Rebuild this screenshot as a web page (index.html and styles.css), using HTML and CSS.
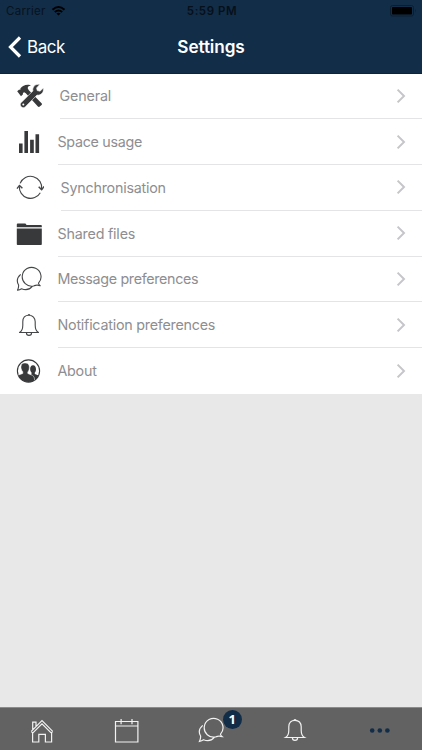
FILE: index.html
```
<!DOCTYPE html>
<html lang="en">
<head>
<meta charset="utf-8">
<title>Settings</title>
<link rel="stylesheet" href="styles.css">
</head>
<body>
<svg class="defs" width="0" height="0" aria-hidden="true">
  <symbol id="chevron" viewBox="0 0 10 16"><path d="M1.6 1.6 8 8 1.6 14.4" fill="none" stroke="#c6c6ca" stroke-width="2"/></symbol>
  <symbol id="chat" viewBox="0 0 26 26"><path d="M22.5 17.2A9.4 9.4 0 1 0 17.5 20C19.5 19.5 20.5 19 21.2 19Q22.5 19.7 24.2 19.7 22.6 18.6 22.5 17.2ZM4.7 8.4C1.2 11.5.5 15.5 2.6 19Q2.8 21.5 1.5 24.3 3.8 23.8 5.5 22.7C9.8 24.4 13.8 23.4 16.3 20.3"/></symbol>
  <symbol id="bell" viewBox="0 0 26 26"><path d="M12 3.2Q13 1.8 14 3.2M3.5 20.5H22.5C19.7 18.8 19.2 17 19.2 13.2V9.8C19.2 5.7 16.7 3.3 13 3.3S6.8 5.7 6.8 9.8V13.2C6.8 17 6.3 18.8 3.5 20.5ZM10.4 20.7C10.4 24.2 15.6 24.2 15.6 20.7"/></symbol>
</svg>
<div class="screen">
  <header class="top">
    <div class="status">
      <div class="carrier"><span>Carrier</span>
        <svg width="15" height="11" viewBox="0 0 15 11"><path d="M.8 4Q7.5-2 14.2 4L12.8 5.4Q7.5.8 2.2 5.4ZM3.1 6.3Q7.5 2.6 11.9 6.3L10.5 7.7Q7.5 5.2 4.5 7.7ZM5.4 8.5Q7.5 6.9 9.6 8.5L7.5 10.6Z"/></svg>
      </div>
      <div class="time">5:59 PM</div>
      <svg class="battery" width="27" height="12" viewBox="0 0 27 12"><rect x=".5" y=".5" width="23" height="10.5" rx="2" fill="none" stroke="#0b1e31"/><rect x="2" y="2" width="20" height="7.5" rx=".8"/><path d="M25 4Q26.5 5.8 25 7.5Z" fill="#0b1e31"/></svg>
    </div>
    <div class="nav">
      <div class="back"><svg width="14" height="22" viewBox="0 0 14 22"><path d="M12 1.5 2.5 11 12 20.5" fill="none" stroke="#fff" stroke-width="3.2"/></svg><span>Back</span></div>
      <h1>Settings</h1>
    </div>
  </header>

  <main class="list">
    <div class="row general">
      <svg class="icon" viewBox="0 0 28 28"><g fill="#38393b"><path d="M1.2 9.2 3.2 7.5 4.2 8.1 4.5 6.2C6.8 3.8 9 2.4 13 2.8L15 3.5C12.3 3.8 11.5 5 11.8 6.5L12.8 8.2 25.8 21.5Q26.3 22.2 25.6 22.9L23.4 24.8Q22.6 25.3 21.9 24.6L9.8 11.3 8.2 10.3 6.9 11.1 7 12.3 5 14.2Z"/><path stroke="#fff" stroke-width=".6" d="M23.7 2.5 20.6 5.9 21.2 8.6 24 9.2 27.4 6.1C28 10.3 25.3 13.6 21 13.1L9.4 24.7C6.5 27.6 2.4 23.5 5.2 20.6L16.900 8.9C16.1 4.8 19.5 1.6 23.7 2.5Z"/></g><circle cx="7.3" cy="22.6" r="1" fill="#fff"/></svg>
      <div class="cell"><span>General</span><svg class="chev"><use href="#chevron"/></svg></div>
    </div>
    <div class="row space">
      <svg class="icon" viewBox="0 0 28 28"><path fill="#38393b" d="M3 15.5h3.6V25H3zM8.4 3H12v22H8.400zM14.100 11.800h3.700V25h-3.700zM19.500 6.200h3.600V25h-3.600z"/></svg>
      <div class="cell"><span>Space usage</span><svg class="chev"><use href="#chevron"/></svg></div>
    </div>
    <div class="row sync">
      <svg class="icon" viewBox="0 0 28 28"><path class="line" d="M4.100 9.400A11.200 11.200 0 0 1 25.600 15.200M24.300 18.700A11.200 11.200 0 0 1 3.400 12.200"/><path class="line arrow" d="M22.700 12.700 25.600 15.800 28 12.500M1 14.700 3.500 11.400 6.400 14.300"/></svg>
      <div class="cell"><span>Synchronisation</span><svg class="chev"><use href="#chevron"/></svg></div>
    </div>
    <div class="row shared">
      <svg class="icon" viewBox="0 0 28 28"><path fill="#38393b" d="M.8 7.300V4.400Q.8 3.500 1.700 3.500H9.400L10.600 5H25Q25.800 5 25.800 5.800V7.300ZM.8 8.400H25.800V24.200Q25.800 25 25 25H1.600Q.8 25 .8 24.200Z"/></svg>
      <div class="cell"><span>Shared files</span><svg class="chev"><use href="#chevron"/></svg></div>
    </div>
    <div class="row message">
      <svg class="icon line"><use href="#chat"/></svg>
      <div class="cell"><span>Message preferences</span><svg class="chev"><use href="#chevron"/></svg></div>
    </div>
    <div class="row notify">
      <svg class="icon line"><use href="#bell"/></svg>
      <div class="cell"><span>Notification preferences</span><svg class="chev"><use href="#chevron"/></svg></div>
    </div>
    <div class="row about">
      <svg class="icon" viewBox="0 0 28 28"><defs><clipPath id="round"><circle cx="12.500" cy="14" r="11"/></clipPath></defs><circle cx="12.500" cy="14" r="11.100" fill="#fff" stroke="#38393b" stroke-width="1.100"/><g clip-path="url(#round)" fill="#38393b"><path d="M14 26V19L15.500 17.300V15.500C13.500 14 13.500 8.300 17 8.300S20.700 14 18.800 15.500V17L24 19V26Z"/><path stroke="#fff" stroke-width=".5" d="M0 27V20L2 18.200 6.800 16.500V14.800C5.300 13 4.700 10.800 5.100 9 5.600 6.200 7.500 6 9.200 6 12.500 6 13.600 8.300 13.300 11 13.200 12.800 12.700 14 11.800 14.900V16.500L16.500 18.400Q18.500 19.500 18.500 22V27Z"/></g></svg>
      <div class="cell"><span>About</span><svg class="chev"><use href="#chevron"/></svg></div>
    </div>
  </main>

  <footer class="tabs">
    <div class="tab"><svg viewBox="0 0 26 26"><path d="M2.300 14.300 13 3.600 23.700 14.300M3.900 15.900 13 6.800 22.100 15.900M2.300 14.300 3.600 15.900M23.700 14.300 22.400 15.900M3.600 15.700V25H9.800V17.300H16.400V25H22.600V15.700M3.700 12.500V5.200H7V9.300"/></svg></div>
    <div class="tab"><svg viewBox="0 0 26 26"><path d="M1.500 4.500H23.900V25H1.500ZM1.500 9H23.900M7.100 2V7.300M18 2V7.300"/></svg></div>
    <div class="tab chats"><svg><use href="#chat"/></svg><b class="badge">1</b></div>
    <div class="tab"><svg><use href="#bell"/></svg></div>
    <div class="tab"><svg class="dots" viewBox="0 0 26 26"><circle cx="5.200" cy="13.500" r="2.300"/><circle cx="12.800" cy="13.500" r="2.300"/><circle cx="20.400" cy="13.500" r="2.300"/></svg></div>
  </footer>
</div>
</body>
</html>
```
FILE: styles.css
```
* { box-sizing: border-box; }
body { margin: 0; font-family: Inter, sans-serif; }
.defs { position: absolute; }
.screen { width: 422px; height: 750px; display: flex; flex-direction: column; background: #e8e8e8; overflow: hidden; }

.top { height: 73.5px; flex: none; background: #122d48; border-bottom: 1px solid #0c243b; }
.status { height: 22px; display: grid; grid-template-columns: 1fr auto 1fr; align-items: center; font-size: 11.5px; color: #06101a; }
.carrier { display: flex; align-items: center; gap: 5px; padding-left: 6px; letter-spacing: .26px; color: #07131f; }
.carrier svg { margin-top: -1px; }
.time { font-weight: 600; font-size: 11.5px; letter-spacing: .55px; padding-left: 2px; }
.battery { justify-self: end; margin-right: 5px; margin-top: -1px; }
.nav { height: 49px; display: grid; grid-template-columns: 1fr auto 1fr; align-items: center; color: #fff; }
.back { display: flex; align-items: center; gap: 5px; padding-left: 8px; font-size: 17px; letter-spacing: -.45px; }
h1 { margin: 0; font-size: 17.2px; font-weight: 600; letter-spacing: -.1px; }

.list { background: #fff; flex: none; }
.row { height: 45.75px; display: flex; align-items: center; padding-left: 16px; }
.icon { width: 28px; height: 28px; flex: none; }
.cell { flex: 1; height: 100%; margin-left: 13.500px; display: flex; align-items: center; justify-content: space-between; padding-right: 16px; border-bottom: 1px solid #e4e4e6; font-size: 14.300px; color: #8e8e91; }
.chev { width: 10px; height: 16px; }
.general .cell { margin-left: 15.500px; letter-spacing: -.15px; }
.space .cell { letter-spacing: -.3px; }
.sync .cell { margin-left: 16.500px; letter-spacing: -.22px; }
.shared .cell { letter-spacing: -.2px; }
.message .cell { letter-spacing: -.32px; }
.notify .cell { letter-spacing: -.23px; }
.about .cell { letter-spacing: -.25px; border: 0; }
.line { fill: none; stroke: #454648; stroke-width: 1.100; stroke-linejoin: round; }
.arrow { stroke-width: 1.400; }
.icon.line { width: 26px; height: 26px; margin-right: 2px; }

.tabs { margin-top: auto; height: 43px; flex: none; display: flex; background: #626262; border-top: 1px solid #8b8b8b; }
.tab { flex: 1; display: flex; justify-content: center; align-items: center; position: relative; padding-top: 2px; }
.tab svg { width: 26px; height: 26px; fill: none; stroke: #f2f2f2; stroke-width: 1.200; }
.tab .dots { fill: #122d48; stroke: none; }
.badge { position: absolute; top: 2px; left: 54px; width: 19px; height: 19px; border-radius: 50%; background: #122d48; color: #fff; font-family: "Open Sans", sans-serif; font-size: 13px; font-weight: 700; line-height: 19px; text-align: center; }
```
